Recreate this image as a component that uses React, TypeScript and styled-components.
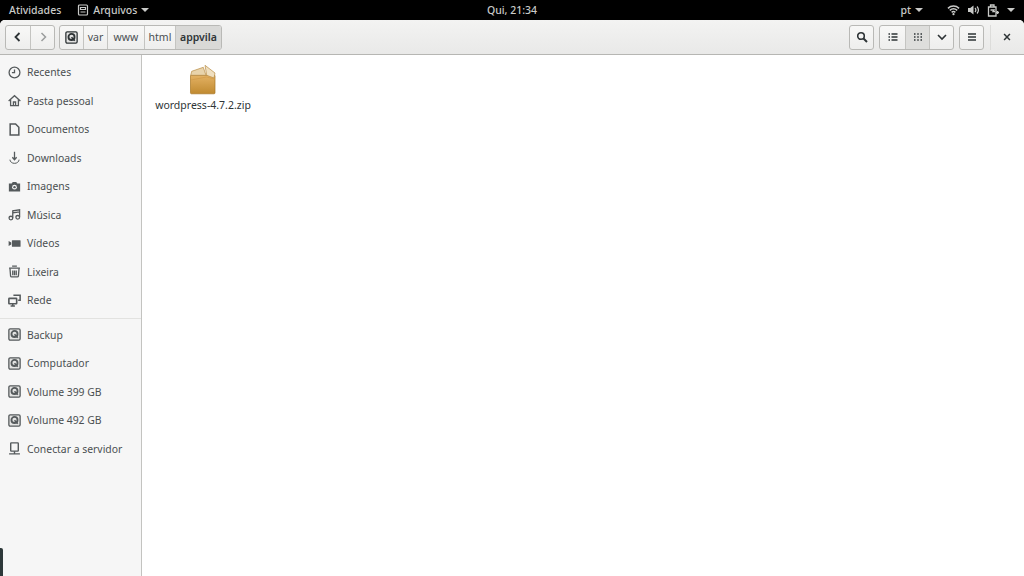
import { ReactNode } from 'react'
import styled, { createGlobalStyle } from 'styled-components'

const GlobalStyle = createGlobalStyle`
    html, body {
        margin: 0;
        padding: 0;
        height: 100%;
        overflow: hidden;
        background: #000;
    }
    #root {
        height: 100%;
    }
`

const Screen = styled.div`
    width: 1024px;
    height: 576px;
    display: flex;
    flex-direction: column;
    position: relative;
    overflow: hidden;
    font-family: "Noto Sans", "Open Sans", sans-serif;
    background: #000;
`

const TopBar = styled.div`
    height: 20px;
    flex: none;
    display: grid;
    grid-template-columns: 1fr auto 1fr;
    align-items: center;
    color: #c9cac8;
    font-size: 10.5px;
    font-weight: 500;
`

const TopLeft = styled.div`
    display: flex;
    align-items: center;
    padding-left: 9px;
    gap: 16px;
`

const AppMenu = styled.div`
    display: flex;
    align-items: center;
    gap: 4px;
`

const TopRight = styled.div`
    display: flex;
    align-items: center;
    justify-content: flex-end;
    padding-right: 9px;
`

const Lang = styled.div`
    display: flex;
    align-items: center;
    gap: 4px;
    margin-right: 24px;
`

const StatusIcons = styled.div`
    display: flex;
    align-items: center;
    gap: 7px;
`

const Caret = styled.span`
    width: 0;
    height: 0;
    border-left: 4px solid transparent;
    border-right: 4px solid transparent;
    border-top: 4px solid #c9cac8;
`

const Window = styled.div`
    flex: 1;
    display: flex;
    flex-direction: column;
    min-height: 0;
    background: #fff;
    border-radius: 5px 5px 0 0;
    overflow: hidden;
`

const Toolbar = styled.div`
    height: 35px;
    flex: none;
    box-sizing: border-box;
    display: flex;
    align-items: center;
    padding: 0 10px 0 5px;
    background: linear-gradient(#f3f3f2, #e9e9e8);
    border-bottom: 1px solid #b6b6b3;
`

const Group = styled.div<{ $gapLeft?: number }>`
    height: 25px;
    display: flex;
    box-sizing: border-box;
    margin-left: ${p => p.$gapLeft ?? 0}px;
    border: 1px solid #b9b9b6;
    border-radius: 3px;
    overflow: hidden;
    background: linear-gradient(#f8f8f7, #eeeeed);
`

const ToolButton = styled.div<{ $width: number; $active?: boolean }>`
    width: ${p => p.$width}px;
    box-sizing: border-box;
    display: flex;
    align-items: center;
    justify-content: center;
    color: #2e3436;
    background: ${p => (p.$active ? '#dededc' : 'transparent')};
    & + & {
        border-left: 1px solid #c4c4c1;
    }
`

const Crumb = styled.div<{ $width: number; $current?: boolean }>`
    width: ${p => p.$width}px;
    box-sizing: border-box;
    display: flex;
    align-items: center;
    justify-content: center;
    font-size: 10.5px;
    font-weight: ${p => (p.$current ? 600 : 400)};
    color: ${p => (p.$current ? '#2e3436' : '#4a5052')};
    background: ${p => (p.$current ? '#d9d9d7' : 'transparent')};
    border-left: 1px solid #c4c4c1;
`

const Spacer = styled.div`
    flex: 1;
`

const VSep = styled.div`
    width: 1px;
    height: 25px;
    margin: 0 9px 0 6px;
    background: #dcdcda;
`

const CloseBox = styled.div`
    width: 14px;
    display: flex;
    justify-content: center;
    color: #2e3436;
`

const Body = styled.div`
    flex: 1;
    display: flex;
    min-height: 0;
`

const Sidebar = styled.div`
    width: 142px;
    flex: none;
    box-sizing: border-box;
    padding-top: 3px;
    background: #f6f6f6;
    border-right: 1px solid #c3c3c0;
`

const Row = styled.div`
    height: 28.5px;
    display: flex;
    align-items: center;
    padding-left: 8px;
    gap: 6px;
    font-size: 10.4px;
    color: #4a4f51;
`

const IconSlot = styled.span`
    width: 13px;
    height: 13px;
    display: flex;
    color: #555a5c;
`

const Divider = styled.div`
    height: 1px;
    margin: 3px 0 2px;
    background: #e2e2e0;
`

const Main = styled.div`
    flex: 1;
    padding: 8px 0 0 13px;
`

const FileItem = styled.div`
    width: 96px;
    display: flex;
    flex-direction: column;
    align-items: center;
    gap: 3px;
`

const FileName = styled.div`
    font-size: 10.5px;
    line-height: 14px;
    color: #2e3436;
    white-space: nowrap;
`

const DockEdge = styled.div`
    position: absolute;
    left: 0;
    bottom: 0;
    width: 3px;
    height: 28px;
    background: #2d3839;
    border-top-right-radius: 2px;
`

type IconProps = { children: ReactNode; size?: number; color?: string }

const Ico = ({ children, size = 13, color = 'currentColor' }: IconProps) => (
    <svg width={size} height={size} viewBox="0 0 12 12" fill="none" stroke={color} strokeWidth="1.2">
        {children}
    </svg>
)

const DiskIcon = ({ size = 13, fg = '#555a5c' }: { size?: number; fg?: string }) => (
    <Ico size={size} color={fg}>
        <rect x=".8" y=".8" width="10.400" height="10.400" rx="1.200" fill="#e4e4e3" />
        <circle cx="6" cy="5.500" r="2.800" strokeWidth="1.700" />
        <path d="M6 5.800 9 9" strokeWidth="1.500" />
    </Ico>
)

const sideTop: [string, ReactNode][] = [
    ['Recentes', <Ico><circle cx="6" cy="6" r="5" /><path d="M6 3.200v3H3.600" /></Ico>],
    ['Pasta pessoal', <Ico><path d="M.6 6.400 6 1.600l5.400 4.800M2.400 5.200V10.800h7.200V5.200" /><path d="M5 10.800V7.400h2v3.400" /></Ico>],
    ['Documentos', <Ico><path d="M2 1h5l3 3v7H2z" strokeWidth="1.400" /></Ico>],
    ['Downloads', <Ico><path d="M6 .8v7M4 5.800 6 8l2-2.200" /><path d="M1.800 8a4.200 3.400 0 0 0 8.400 0" strokeWidth=".9" /></Ico>],
    ['Imagens', <Ico><path d="M.8 3.200h2.600L4.400 1.800h3.200l1 1.400h2.600V10.600H.8z" fill="currentColor" stroke="none" /><circle cx="6" cy="6.600" r="2.200" fill="#f6f6f6" stroke="none" /><circle cx="6" cy="6.600" r="1.100" fill="currentColor" stroke="none" /></Ico>],
    ['Música', <Ico><circle cx="2.700" cy="9.300" r="1.700" /><circle cx="9" cy="8.600" r="1.700" /><path d="M4.400 9V2.600l6.300-1V8.400M4.400 4.500l6.300-1" /></Ico>],
    ['Vídeos', <Ico><rect x="3.600" y="3" width="8" height="6" rx=".5" fill="currentColor" stroke="none" /><path d="M.6 3.600v4.800L3 7V5z" fill="currentColor" stroke="none" /></Ico>],
    ['Lixeira', <Ico><path d="M1 2.800h10M3.800 1h4.400" /><path d="M1.800 3l.6 7.200a1 1 0 0 0 1 .8h5.200a1 1 0 0 0 1-.8L10.200 3M4.400 5v4.500M6 5v4.500M7.600 5v4.500" /></Ico>],
    ['Rede', <Ico><rect x=".8" y="4" width="7.200" height="5" rx=".5" strokeWidth="1.500" /><path d="M2.400 11h4M4.400 9v2" strokeWidth="1.400" /><path d="M5 1.200h6.200v4.600H9.400" strokeWidth="1.400" /></Ico>],
]

const sideBottom: [string, ReactNode][] = [
    ['Backup', <DiskIcon />],
    ['Computador', <DiskIcon />],
    ['Volume 399 GB', <DiskIcon />],
    ['Volume 492 GB', <DiskIcon />],
    ['Conectar a servidor', <Ico><rect x="2.500" y=".8" width="7" height="7.600" rx=".5" strokeWidth="1.300" /><path d="M6 8.500V10.500M1 11h10" strokeWidth="1.300" /></Ico>],
]

const PackageIcon = () => (
    <svg width="30" height="32" viewBox="0 0 30 32">
        <defs>
            <linearGradient id="boxBody" x1="0" y1="0" x2="0" y2="1">
                <stop offset="0" stopColor="#e3b163" />
                <stop offset="1" stopColor="#c08a30" />
            </linearGradient>
        </defs>
        <path d="M2.500 12.500H27V29.800a1 1 0 0 1-1 1H3.500a1 1 0 0 1-1-1z" fill="url(#boxBody)" stroke="#a87522" strokeWidth=".7" />
        <path d="M3.700 8.300 15.300 4.300 18 12.300H2.700z" fill="#e8d3ab" stroke="#b98c45" strokeWidth=".7" />
        <path d="M17 2.300 27 10 26 15 18.700 12.300z" fill="#efdfc0" stroke="#b98c45" strokeWidth=".7" />
        <path d="M3 17 18.500 14 26.500 16" fill="none" stroke="#d29c4b" strokeWidth=".8" />
    </svg>
)

const App = () => (
    <Screen>
        <GlobalStyle />
        <TopBar>
            <TopLeft>
                <span>Atividades</span>
                <AppMenu>
                    <Ico size={12} color="#c9cac8">
                        <rect x="1.500" y="1" width="9" height="10" rx="1" />
                        <path d="M3.500 3.500h5v2h-5zM3.500 8h5" />
                    </Ico>
                    <span>Arquivos</span>
                    <Caret />
                </AppMenu>
            </TopLeft>
            <span>Qui, 21:34</span>
            <TopRight>
                <Lang>
                    <span>pt</span>
                    <Caret />
                </Lang>
                <StatusIcons>
                    <svg width="13" height="12" viewBox="0 0 14 12" fill="none" stroke="#c9cac8" strokeWidth="1.600">
                        <path d="M1 4.200C4.500 1 9.500 1 13 4.200M3 6.400C5.500 4.300 8.500 4.300 11 6.400M5 8.500C6.200 7.500 7.800 7.500 9 8.500" />
                        <circle cx="7" cy="10.500" r="1.200" fill="#c9cac8" stroke="none" />
                    </svg>
                    <svg width="13" height="12" viewBox="0 0 13 12" fill="none" stroke="#c9cac8" strokeWidth="1.200">
                        <path d="M1 4h2.200L6.500 1.500v9L3.200 8H1z" fill="#c9cac8" stroke="none" />
                        <path d="M8 4a3 3 0 0 1 0 4M10 2.500a5.500 5.500 0 0 1 0 7" />
                    </svg>
                    <svg width="13" height="13" viewBox="0 0 13 13" fill="none" stroke="#c9cac8" strokeWidth="1.300">
                        <path d="M1.500 3h7.500v9H1.500zM3.500 3V1h3.500v2" />
                        <path d="M3.500 6h3.500l-1 1.500h2" />
                        <path d="M9 8.500h3M10.500 7v3" />
                    </svg>
                    <Caret />
                </StatusIcons>
            </TopRight>
        </TopBar>
        <Window>
            <Toolbar>
                <Group>
                    <ToolButton $width={24}>
                        <Ico size={12}><path d="M7.500 2 3.500 6l4 4" strokeWidth="1.800" /></Ico>
                    </ToolButton>
                    <ToolButton $width={24}>
                        <Ico size={12} color="#9a9d9d"><path d="M4.500 2l4 4-4 4" strokeWidth="1.500" /></Ico>
                    </ToolButton>
                </Group>
                <Group $gapLeft={4}>
                    <ToolButton $width={23}>
                        <DiskIcon fg="#2e3436" />
                    </ToolButton>
                    <Crumb $width={24}>var</Crumb>
                    <Crumb $width={37}>www</Crumb>
                    <Crumb $width={31}>html</Crumb>
                    <Crumb $width={46} $current>appvila</Crumb>
                </Group>
                <Spacer />
                <Group>
                    <ToolButton $width={23}>
                        <Ico size={12}><circle cx="5" cy="5" r="3.300" strokeWidth="1.600" /><path d="M7.500 7.500 11 11" strokeWidth="2" /></Ico>
                    </ToolButton>
                </Group>
                <Group $gapLeft={5}>
                    <ToolButton $width={25}>
                        <Ico size={12}><path d="M1.500 3h1.500M1.500 6h1.500M1.500 9h1.500M4.500 3h6M4.500 6h6M4.500 9h6" strokeWidth="1.400" /></Ico>
                    </ToolButton>
                    <ToolButton $width={24} $active>
                        <Ico size={12}><path d="M2 3h1.500M5.250 3h1.500M8.500 3h1.500M2 6h1.500M5.250 6h1.500M8.500 6h1.500M2 9h1.500M5.250 9h1.500M8.500 9h1.500" strokeWidth="1.300" /></Ico>
                    </ToolButton>
                    <ToolButton $width={24}>
                        <Ico size={12}><path d="M2 4l4 4 4-4" strokeWidth="1.600" /></Ico>
                    </ToolButton>
                </Group>
                <Group $gapLeft={5}>
                    <ToolButton $width={23}>
                        <Ico size={12}><path d="M2 3h8M2 6h8M2 9h8" strokeWidth="1.500" /></Ico>
                    </ToolButton>
                </Group>
                <VSep />
                <CloseBox>
                    <Ico size={10}><path d="M2.500 2.500l7 7M9.500 2.500l-7 7" strokeWidth="1.800" /></Ico>
                </CloseBox>
            </Toolbar>
            <Body>
                <Sidebar>
                    {sideTop.map(([label, icon]) => (
                        <Row key={label}>
                            <IconSlot>{icon}</IconSlot>
                            {label}
                        </Row>
                    ))}
                    <Divider />
                    {sideBottom.map(([label, icon]) => (
                        <Row key={label}>
                            <IconSlot>{icon}</IconSlot>
                            {label}
                        </Row>
                    ))}
                </Sidebar>
                <Main>
                    <FileItem>
                        <PackageIcon />
                        <FileName>wordpress-4.7.2.zip</FileName>
                    </FileItem>
                </Main>
            </Body>
        </Window>
        <DockEdge />
    </Screen>
)

export default App
